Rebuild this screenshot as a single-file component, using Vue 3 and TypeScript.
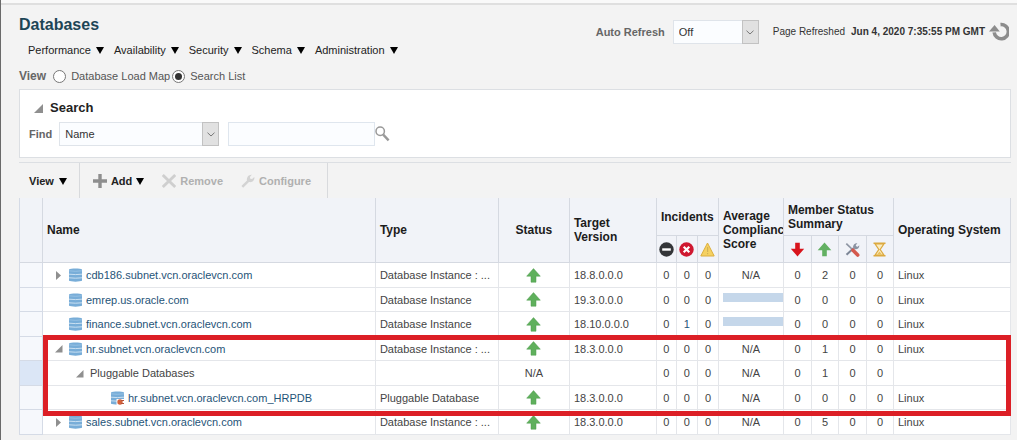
<script setup lang="ts">
import { ref } from 'vue'

interface Row {
  name: string
  kind: 'database' | 'folder' | 'pluggable'
  expander: 'closed' | 'open' | 'none'
  type: string
  status: 'up' | 'N/A'
  version: string
  incidents: number[]
  compliance: string
  members: number[]
  os: string
  selected?: boolean
}

interface Group {
  highlighted: boolean
  rows: Row[]
}

const menus = ['Performance', 'Availability', 'Security', 'Schema', 'Administration']
const viewMode = ref('list')
const autoRefresh = ref('Off')
const findBy = ref('Name')
const query = ref('')

const groups: Group[] = [
  {
    highlighted: false,
    rows: [
      { name: 'cdb186.subnet.vcn.oraclevcn.com', kind: 'database', expander: 'closed', type: 'Database Instance : ...', status: 'up', version: '18.8.0.0.0', incidents: [0, 0, 0], compliance: 'N/A', members: [0, 2, 0, 0], os: 'Linux' },
      { name: 'emrep.us.oracle.com', kind: 'database', expander: 'none', type: 'Database Instance', status: 'up', version: '19.3.0.0.0', incidents: [0, 0, 0], compliance: '', members: [0, 0, 0, 0], os: 'Linux' },
      { name: 'finance.subnet.vcn.oraclevcn.com', kind: 'database', expander: 'none', type: 'Database Instance', status: 'up', version: '18.10.0.0.0', incidents: [0, 1, 0], compliance: '', members: [0, 0, 0, 0], os: 'Linux' },
    ],
  },
  {
    highlighted: true,
    rows: [
      { name: 'hr.subnet.vcn.oraclevcn.com', kind: 'database', expander: 'open', type: 'Database Instance : ...', status: 'up', version: '18.3.0.0.0', incidents: [0, 0, 0], compliance: 'N/A', members: [0, 1, 0, 0], os: 'Linux' },
      { name: 'Pluggable Databases', kind: 'folder', expander: 'open', type: '', status: 'N/A', version: '', incidents: [0, 0, 0], compliance: 'N/A', members: [0, 1, 0, 0], os: '', selected: true },
      { name: 'hr.subnet.vcn.oraclevcn.com_HRPDB', kind: 'pluggable', expander: 'none', type: 'Pluggable Database', status: 'up', version: '18.3.0.0.0', incidents: [0, 0, 0], compliance: 'N/A', members: [0, 0, 0, 0], os: 'Linux' },
    ],
  },
  {
    highlighted: false,
    rows: [
      { name: 'sales.subnet.vcn.oraclevcn.com', kind: 'database', expander: 'closed', type: 'Database Instance : ...', status: 'up', version: '18.3.0.0.0', incidents: [0, 0, 0], compliance: 'N/A', members: [0, 5, 0, 0], os: 'Linux' },
    ],
  },
]
</script>

<template>
  <div class="page">
    <div class="strip"></div>
    <main class="content">
      <header class="head">
        <div>
          <h1>Databases</h1>
          <nav class="menus">
            <button v-for="m in menus" :key="m" type="button" class="menu">
              {{ m }}
              <svg class="caret" viewBox="0 0 8 7"><path d="M0 0h8L4 7z" /></svg>
            </button>
          </nav>
        </div>
        <div class="refresh">
          <label class="strong" for="auto">Auto Refresh</label>
          <span class="drop drop-auto">
            <select id="auto" v-model="autoRefresh"><option>Off</option></select>
            <span class="drop-btn"><svg viewBox="0 0 8 5"><path d="M0.5 0.7 4 4 7.5 0.7" /></svg></span>
          </span>
          <span class="stamp"><span>Page Refreshed</span><b>Jun 4, 2020 7:35:55 PM GMT</b></span>
          <button type="button" class="reload" aria-label="Refresh page">
            <svg viewBox="0 0 20 20">
              <path d="M11.5 2.6A7.1 7.1 0 1 1 5.2 10.4" fill="none" stroke="#8c8c8c" stroke-width="3.6" />
              <path d="M0 9.4 5.6 3l5.2 6.4z" fill="#8c8c8c" />
            </svg>
          </button>
        </div>
      </header>

      <div class="modes">
        <span class="strong">View</span>
        <label><input v-model="viewMode" type="radio" name="mode" value="map" />Database Load Map</label>
        <label><input v-model="viewMode" type="radio" name="mode" value="list" />Search List</label>
      </div>

      <section class="panel">
        <h2>
          <button type="button" class="twist" aria-label="Collapse search">
            <svg viewBox="0 0 9 9"><path d="M9 0v9H0z" /></svg>
          </button>
          Search
        </h2>
        <div class="find">
          <label class="strong" for="by">Find</label>
          <span class="drop drop-find">
            <select id="by" v-model="findBy"><option>Name</option></select>
            <span class="drop-btn"><svg viewBox="0 0 8 5"><path d="M0.5 0.7 4 4 7.5 0.7" /></svg></span>
          </span>
          <input v-model="query" class="query" type="text" aria-label="Search text" />
          <button type="button" class="go" aria-label="Search">
            <svg viewBox="0 0 15 16">
              <circle cx="5.2" cy="5.3" r="4.2" fill="none" stroke="#999" stroke-width="1.5" />
              <path d="M8.2 8.6 13.6 14.4" stroke="#999" stroke-width="2.4" />
            </svg>
          </button>
        </div>
      </section>

      <div class="toolbar">
        <div class="tools tools-view">
          <button type="button">View <svg class="caret" viewBox="0 0 8 7"><path d="M0 0h8L4 7z" /></svg></button>
        </div>
        <div class="tools tools-edit">
          <button type="button">
            <svg class="tool" viewBox="0 0 14 14"><path d="M5.3 0h3.4v5.3H14v3.4H8.7V14H5.3V8.7H0V5.3h5.3z" fill="#8e8e8e" /></svg>
            Add <svg class="caret" viewBox="0 0 8 7"><path d="M0 0h8L4 7z" /></svg>
          </button>
          <button type="button" disabled>
            <svg class="tool" viewBox="0 0 14 14"><path d="M0.8 1 13.2 13M13.2 1 0.8 13" stroke="#cfcfcf" stroke-width="2.8" /></svg>
            Remove
          </button>
          <button type="button" disabled>
            <svg class="tool" viewBox="0 0 14 14">
              <path d="M0.4 12 6 6.5C5.4 3.6 7.4 0.6 10.8 0.8L8.9 3l.4 1.7 1.8.4 2.2-2C14 6.2 11.3 8.8 8 8L2.2 13.7z" fill="#d3d3d3" />
            </svg>
            Configure
          </button>
        </div>
      </div>

      <table>
        <colgroup>
          <col class="c-sel" /><col /><col class="c-type" /><col class="c-status" /><col class="c-ver" />
          <col class="c-20" /><col class="c-21" /><col class="c-21" /><col class="c-score" />
          <col class="c-28" /><col class="c-27" /><col class="c-28" /><col class="c-27" /><col class="c-os" />
        </colgroup>
        <thead>
          <tr class="h-top">
            <th rowspan="2"></th>
            <th rowspan="2">Name</th>
            <th rowspan="2">Type</th>
            <th rowspan="2" class="mid">Status</th>
            <th rowspan="2">Target<br />Version</th>
            <th colspan="3" class="sub">Incidents</th>
            <th rowspan="2">Average<br />Compliance<br />Score</th>
            <th colspan="4" class="sub">Member Status Summary</th>
            <th rowspan="2">Operating System</th>
          </tr>
          <tr class="h-icons">
            <th>
              <svg viewBox="0 0 15 15" role="img" aria-label="Fatal"><circle cx="7.5" cy="7.5" r="7.2" fill="#333538" /><path d="M3.2 6.3h8.6v2.4H3.2z" fill="#fff" /></svg>
            </th>
            <th>
              <svg viewBox="0 0 15 15" role="img" aria-label="Critical"><circle cx="7.5" cy="7.5" r="7.2" fill="#cf1830" /><path d="M4.7 4.7l5.6 5.6M10.3 4.7 4.7 10.3" stroke="#fff" stroke-width="2.2" /></svg>
            </th>
            <th>
              <svg viewBox="0 0 15 15" role="img" aria-label="Warning"><path d="M7.5 1 14.2 14H.8z" fill="#f5d162" stroke="#dcae3c" stroke-linejoin="round" /><path d="M7 5h1.2v5H7zM7 11h1.2v1.3H7z" fill="#d3b256" /></svg>
            </th>
            <th>
              <svg viewBox="0 0 15 15" role="img" aria-label="Down"><path d="M5.2.8h4.6v6h4.4L7.5 14.4.8 6.8h4.4z" fill="#d8141c" /></svg>
            </th>
            <th>
              <svg viewBox="0 0 15 15" role="img" aria-label="Up"><path d="M7.5.6 14.3 8.2H9.8v6H5.2v-6H.7z" fill="#62b062" /></svg>
            </th>
            <th>
              <svg viewBox="0 0 15 15" role="img" aria-label="Blackout">
                <path d="M1.5 12.8 8.5 6.3" stroke="#7c8696" stroke-width="2" />
                <path d="M8 5.6C7.8 3 9.8 1 12.4 1.3l-1.7 2 .8 1.2 1.2.2 1.6-1.5C14.5 6 12 8 9.4 7.1z" fill="#8b93a2" />
                <path d="M1.3 1.6 8 8" stroke="#8f96a4" stroke-width="1.7" />
                <path d="M8 8.2 12.7 13" stroke="#d4594d" stroke-width="3.6" stroke-linecap="round" />
              </svg>
            </th>
            <th>
              <svg viewBox="0 0 15 15" role="img" aria-label="Pending">
                <path d="M3 1.8h9L8.2 7.5 12 13.2H3L6.8 7.5z" fill="#fbecc0" stroke="#dca93f" stroke-width="1.2" />
                <path d="M1.5 1.2h12M1.5 13.8h12" stroke="#dca93f" stroke-width="1.6" />
                <path d="M7.5 9.5 10 12.6H5z" fill="#e9bf5b" />
              </svg>
            </th>
          </tr>
        </thead>
        <tbody v-for="(g, gi) in groups" :key="gi" :class="{ marked: g.highlighted }">
          <tr v-for="r in g.rows" :key="r.name">
            <td class="sel" :class="{ on: r.selected }"></td>
            <td>
              <div class="name" :class="r.kind">
                <span v-if="r.kind !== 'pluggable'" class="slot">
                  <button v-if="r.expander !== 'none'" type="button" class="twist" :aria-label="'Toggle ' + r.name">
                    <svg v-if="r.expander === 'open'" viewBox="0 0 9 9"><path d="M8.5 1v7.5H1z" /></svg>
                    <svg v-else viewBox="0 0 9 9"><path d="M2 0l5 4.5L2 9z" /></svg>
                  </button>
                </span>
                <svg v-if="r.kind !== 'folder'" class="db" viewBox="0 0 13 14">
                  <path d="M0 1.5C1.5 0.2 11.5 0.2 13 1.5V12.8C11.5 13.9 1.5 13.9 0 12.8z" fill="#78add8" />
                  <path d="M0 2.8Q6.5 3.8 13 2.8" fill="none" stroke="#9dc5e6" stroke-width=".8" />
                  <path d="M0 6.2Q6.5 7 13 6.2M0 9.8Q6.5 10.6 13 9.8" fill="none" stroke="#d3e5f4" stroke-width=".9" />
                  <g v-if="r.kind === 'pluggable'">
                    <path d="M5.5 8H13v6H5.5z" fill="#fff" />
                    <circle cx="9" cy="11" r="2.7" fill="#d4623c" />
                    <path d="M10 9.5h3M10 12.5h3" stroke="#b5523a" stroke-width="1" />
                  </g>
                </svg>
                <span v-if="r.kind === 'folder'">{{ r.name }}</span>
                <a v-else href="#">{{ r.name }}</a>
              </div>
            </td>
            <td>{{ r.type }}</td>
            <td class="mid">
              <svg v-if="r.status === 'up'" class="up" viewBox="0 0 15 15" role="img" aria-label="Up"><path d="M7.5.6 14.3 8.2H10v6H5v-6H.7z" fill="#5fb05c" stroke="#4f9a4e" stroke-width=".5" /></svg>
              <template v-else>{{ r.status }}</template>
            </td>
            <td>{{ r.version }}</td>
            <td v-for="(n, i) in r.incidents" :key="'i' + i" class="num">
              <a v-if="n" href="#">{{ n }}</a><template v-else>0</template>
            </td>
            <td v-if="r.compliance" class="mid">{{ r.compliance }}</td>
            <td v-else class="score"><div class="bar"></div></td>
            <td v-for="(n, i) in r.members" :key="'m' + i" class="num">{{ n }}</td>
            <td>{{ r.os }}</td>
          </tr>
        </tbody>
      </table>
    </main>
  </div>
</template>

<style>
body {
  background: #f3f3f3;
}
</style>

<style scoped>
.page {
  min-height: 100vh;
  box-sizing: border-box;
  overflow: hidden;
  border-left: 1px solid #6a6a6a;
  background: #f3f3f3;
  color: #333;
  font: 11px/16px "Liberation Sans", Arial, sans-serif;
}
.strip {
  height: 3px;
  background: #f9f9f9;
  border-bottom: 2px solid #dfdfdf;
}
.content {
  padding: 10px 6px 0 18px;
}
svg {
  display: block;
  flex: none;
}
button {
  display: flex;
  align-items: center;
  padding: 0;
  border: 0;
  background: none;
  color: inherit;
  font: inherit;
}
.strong {
  color: #666;
  font-weight: bold;
}
.head {
  display: flex;
  justify-content: space-between;
  align-items: flex-start;
}
h1 {
  margin: 0 0 7px;
  color: #1d4556;
  font-size: 16px;
  line-height: 20px;
}
.menus {
  display: flex;
  gap: 10px;
  padding-left: 9px;
  color: #222;
}
.menu {
  gap: 5px;
}
.caret {
  width: 8px;
  height: 7px;
  margin-top: 1px;
  fill: #000;
}
.refresh {
  display: flex;
  align-items: center;
  padding: 5px 2px 0 0;
}
.drop {
  display: grid;
  height: 24px;
}
.drop > * {
  grid-area: 1 / 1;
}
.drop select {
  width: 100%;
  height: 24px;
  padding: 0 20px 0 5px;
  appearance: none;
  border: 1px solid #dfe4ea;
  border-radius: 0;
  background: #fbfdff;
  color: #333;
  font: inherit;
}
.drop-btn {
  display: grid;
  place-items: center;
  justify-self: end;
  width: 17px;
  height: 24px;
  box-sizing: border-box;
  border: 1px solid #c2c2c2;
  background: #e1e1e1;
  pointer-events: none;
}
.drop-btn svg {
  width: 8px;
  height: 5px;
  fill: none;
  stroke: #777;
}
.drop-auto {
  width: 86px;
  margin: 0 14px 0 8px;
}
.stamp {
  display: flex;
  gap: 6px;
  font-size: 10px;
}
.reload {
  margin-left: 4px;
}
.reload svg {
  width: 20px;
  height: 20px;
}
.modes {
  display: flex;
  align-items: center;
  gap: 2px;
  margin: 10px 0 5px;
  color: #555;
}
.modes .strong {
  margin-right: 5px;
  font-size: 12px;
}
.modes label {
  display: flex;
  align-items: center;
  gap: 5px;
}
.modes input {
  display: grid;
  place-items: center;
  width: 13px;
  height: 13px;
  margin: 0;
  appearance: none;
  border: 1px solid #777;
  border-radius: 50%;
  background: #fff;
}
.modes input:checked::after {
  content: "";
  width: 7px;
  height: 7px;
  border-radius: 50%;
  background: #333;
}
.panel {
  padding: 10px 9px 11px;
  border: 1px solid #dcdfe3;
  background: #fff;
}
h2 {
  display: flex;
  align-items: center;
  gap: 7px;
  margin: 0 0 6px;
  padding-left: 5px;
  color: #222;
  font-size: 13px;
  line-height: 16px;
}
.twist svg {
  width: 9px;
  height: 9px;
  fill: #8f8f8f;
}
.find {
  display: flex;
  align-items: center;
}
.drop-find {
  width: 160px;
  margin: 0 9px 0 7px;
}
.query {
  width: 147px;
  height: 24px;
  box-sizing: border-box;
  padding: 0 5px;
  border: 1px solid #dfe6ee;
  background: #fbfdff;
  font: inherit;
}
.go svg {
  width: 15px;
  height: 16px;
}
.toolbar {
  display: flex;
  height: 35px;
  margin-top: 4px;
  border-top: 1px solid #dcdfe3;
  color: #222;
  font-weight: bold;
}
.tools {
  display: flex;
  border-right: 1px solid #d8dadd;
}
.tools-view {
  padding: 0 12px 0 10px;
}
.tools-view button {
  gap: 5px;
}
.tools-edit {
  gap: 18px;
  padding: 0 16px 0 13px;
}
.tools-edit button {
  gap: 4px;
}
.tools button:disabled {
  color: #b0b0b0;
}
.tool {
  width: 14px;
  height: 14px;
}
table {
  width: 100%;
  table-layout: fixed;
  border-collapse: separate;
  border-spacing: 0;
  border-left: 1px solid #d5dbe6;
  background: #fff;
}
.c-sel { width: 23px; }
.c-type { width: 123px; }
.c-status { width: 71px; }
.c-ver { width: 87px; }
.c-20 { width: 20px; }
.c-21 { width: 21px; }
.c-score { width: 65px; }
.c-27 { width: 27px; }
.c-28 { width: 28px; }
.c-os { width: 117px; }
th,
td {
  box-sizing: border-box;
  overflow: hidden;
  padding: 0 0 0 4px;
  border-right: 1px solid #e4e6ea;
  border-bottom: 1px solid #e4e6ea;
  text-align: left;
  vertical-align: middle;
  white-space: nowrap;
}
th {
  border-color: #d5d9e1;
  background: #f1f3f8;
  color: #1c1c1c;
  font-size: 12px;
  line-height: 14px;
}
th.sub {
  white-space: normal;
}
.h-top {
  height: 38px;
}
.h-icons {
  height: 27px;
}
.h-icons th {
  padding: 0;
}
.h-icons svg {
  width: 15px;
  height: 15px;
  margin: 0 auto;
}
th.mid,
td.mid,
td.num {
  padding: 0;
  text-align: center;
}
tbody tr {
  height: 24px;
}
tbody:not(.marked) tr:nth-child(odd),
tbody.marked tr:nth-child(even) {
  height: 25px;
}
td {
  color: #444;
}
td.sel {
  border-color: #d5dbe6;
  background: #f6f8fc;
}
td.sel.on {
  background: #dbe6f6;
}
a {
  color: #1f5478;
  text-decoration: none;
}
.name {
  display: flex;
  align-items: center;
  padding-left: 7px;
}
.name.folder {
  padding-left: 28px;
}
.name.pluggable {
  padding-left: 64px;
}
.slot {
  width: 15px;
}
.db {
  width: 13px;
  height: 14px;
  margin-right: 4px;
}
.up {
  width: 15px;
  height: 15px;
  margin: 0 auto;
}
td.score {
  vertical-align: top;
}
.bar {
  height: 9px;
  margin-top: 5px;
  background: #c5d7ea;
}
.marked {
  position: relative;
}
.marked::after {
  content: "";
  position: absolute;
  inset: -2px 0 -6px 23px;
  border: 5px solid #dc1f26;
  pointer-events: none;
}
</style>
